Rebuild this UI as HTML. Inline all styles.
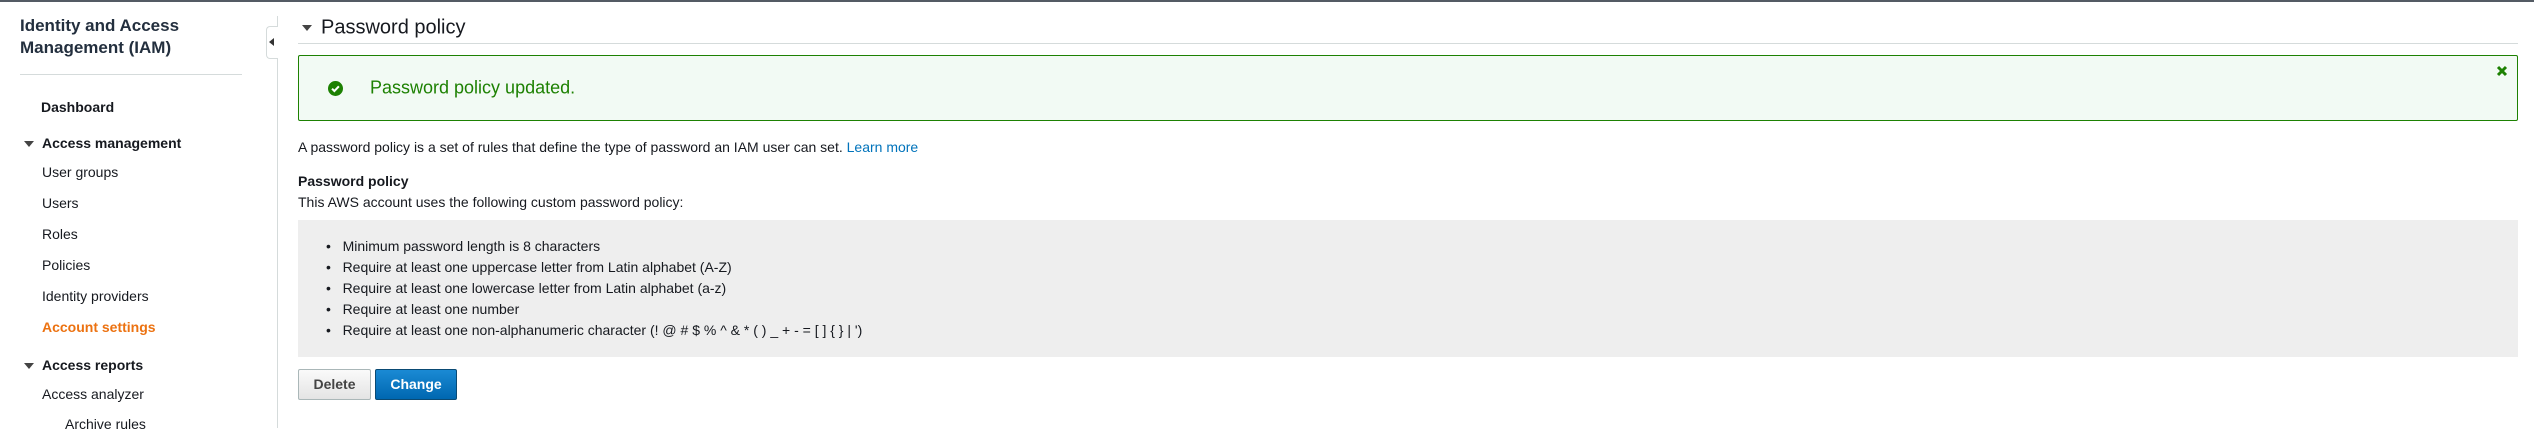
<!DOCTYPE html>
<html><head><meta charset="utf-8"><style>
*{margin:0;padding:0;box-sizing:border-box}
body{width:2534px;height:428px;overflow:hidden;background:#fff;font-family:"Liberation Sans",Arial,sans-serif;color:#16191f;position:relative}
.a{position:absolute;white-space:nowrap}
.topb{left:0;top:0;width:2534px;height:2px;background:#545b64}
.side{font-size:14px;color:#16191f;transform:translateY(-50%)}
.tri{width:0;height:0;border-left:5px solid transparent;border-right:5px solid transparent;border-top:6px solid #444}
.main{font-size:14px;transform:translateY(-50%)}
li{list-style:none}
</style></head><body>
<div class="a topb"></div>
<div class="a" style="left:20px;top:15px;font-size:17px;font-weight:bold;line-height:22px;color:#232f3e">Identity and Access<br>Management (IAM)</div>
<div class="a" style="left:20px;top:74px;width:222px;height:1px;background:#d5dbdb"></div>
<div class="a side" style="left:41px;top:107px;font-weight:bold">Dashboard</div>
<div class="a tri" style="left:24px;top:141px"></div>
<div class="a side" style="left:42px;top:143px;font-weight:bold">Access management</div>
<div class="a side" style="left:42px;top:172px">User groups</div>
<div class="a side" style="left:42px;top:203px">Users</div>
<div class="a side" style="left:42px;top:234px">Roles</div>
<div class="a side" style="left:42px;top:265px">Policies</div>
<div class="a side" style="left:42px;top:296px">Identity providers</div>
<div class="a side" style="left:42px;top:327px;font-weight:bold;color:#ec7211">Account settings</div>
<div class="a tri" style="left:24px;top:363px"></div>
<div class="a side" style="left:42px;top:365px;font-weight:bold">Access reports</div>
<div class="a side" style="left:42px;top:394px">Access analyzer</div>
<div class="a side" style="left:65px;top:424px">Archive rules</div>
<div class="a" style="left:277px;top:16px;width:1px;height:412px;background:#d5dbdb"></div>
<div class="a" style="left:266px;top:26px;width:12px;height:33px;border:1px solid #d5dbdb;border-right:none;border-radius:4px 0 0 4px;background:#fff"></div>
<div class="a" style="left:269px;top:38px;width:0;height:0;border-top:4px solid transparent;border-bottom:4px solid transparent;border-right:5px solid #333"></div>
<div class="a tri" style="left:302px;top:25px"></div>
<div class="a main" style="left:321px;top:28px;font-size:20px;color:#16191f">Password policy</div>
<div class="a" style="left:298px;top:43px;width:2220px;height:1px;background:#d5dbdb"></div>
<div class="a" style="left:298px;top:55px;width:2220px;height:66px;border:1px solid #1d8102;border-radius:2px;background:#f2faf4"></div>
<svg class="a" style="left:328px;top:81px" width="15" height="15" viewBox="0 0 16 16"><circle cx="8" cy="8" r="8" fill="#1d8102"/><path d="M4.3 8.2l2.5 2.5 4.8-5" stroke="#fff" stroke-width="2.2" fill="none"/></svg>
<div class="a main" style="left:370px;top:88px;font-size:18px;color:#1d8102">Password policy updated.</div>
<svg class="a" style="left:2496px;top:65px" width="12" height="12" viewBox="0 0 12 12"><path d="M2 2L10 10M10 2L2 10" stroke="#1d8102" stroke-width="3"/></svg>
<div class="a main" style="left:298px;top:147px">A password policy is a set of rules that define the type of password an IAM user can set. <span style="color:#0073bb">Learn more</span></div>
<div class="a main" style="left:298px;top:181px;font-weight:bold">Password policy</div>
<div class="a main" style="left:298px;top:202px">This AWS account uses the following custom password policy:</div>
<div class="a" style="left:298px;top:220px;width:2220px;height:137px;background:#eeeeee"></div>
<div class="a main" style="left:326px;top:246px">•&nbsp;&nbsp;&nbsp;Minimum password length is 8 characters</div>
<div class="a main" style="left:326px;top:267px">•&nbsp;&nbsp;&nbsp;Require at least one uppercase letter from Latin alphabet (A-Z)</div>
<div class="a main" style="left:326px;top:288px">•&nbsp;&nbsp;&nbsp;Require at least one lowercase letter from Latin alphabet (a-z)</div>
<div class="a main" style="left:326px;top:309px">•&nbsp;&nbsp;&nbsp;Require at least one number</div>
<div class="a main" style="left:326px;top:330px">•&nbsp;&nbsp;&nbsp;Require at least one non-alphanumeric character (! @ # $ % ^ &amp; * ( ) _ + - = [ ] { } | ')</div>
<div class="a" style="left:298px;top:369px;width:73px;height:31px;border:1px solid #aab7b8;border-radius:2px;background:linear-gradient(#fafafa,#e4e4e4);font-size:14px;font-weight:bold;color:#444;text-align:center;line-height:29px">Delete</div>
<div class="a" style="left:375px;top:369px;width:82px;height:31px;border:1px solid #0a4a74;border-radius:2px;background:linear-gradient(#1a8ad4,#0067b0);font-size:14px;font-weight:bold;color:#fff;text-align:center;line-height:29px">Change</div>
</body></html>
